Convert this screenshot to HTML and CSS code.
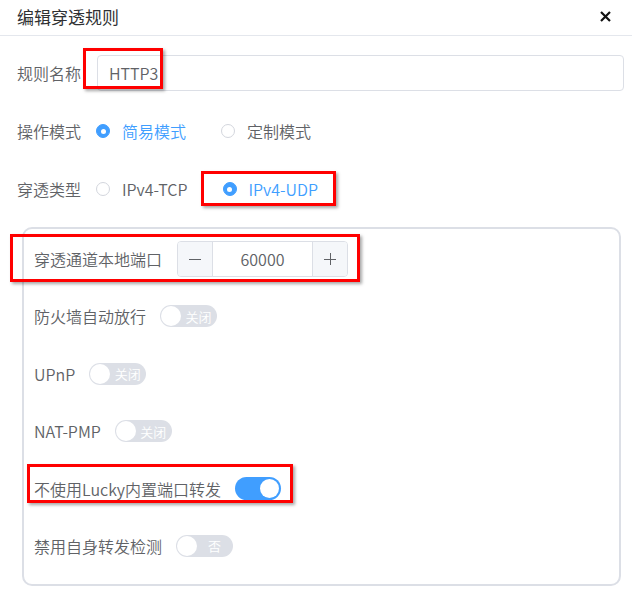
FILE: index.html
```html
<!DOCTYPE html>
<html lang="zh-CN">
<head>
<meta charset="utf-8">
<title>编辑穿透规则</title>
<link rel="stylesheet" href="styles.css">
</head>
<body>
<div class="dialog">
  <div class="header">
    <span class="title">编辑穿透规则</span>
    <span class="close">
      <svg width="11" height="11" viewBox="0 0 11 11"><path d="M1 1L10 10M10 1L1 10" stroke="#111" stroke-width="2.2" stroke-linecap="butt" fill="none"/></svg>
    </span>
  </div>
  <div class="body">
    <div class="form-row">
      <span class="label">规则名称</span>
      <div class="input">HTTP3</div>
    </div>
    <div class="form-row">
      <span class="label">操作模式</span>
      <span class="radio checked"><span class="radio-dot"></span><span class="radio-text">简易模式</span></span>
      <span class="radio"><span class="radio-dot"></span><span class="radio-text">定制模式</span></span>
    </div>
    <div class="form-row">
      <span class="label">穿透类型</span>
      <span class="radio"><span class="radio-dot"></span><span class="radio-text">IPv4-TCP</span></span>
      <span class="radio checked"><span class="radio-dot"></span><span class="radio-text">IPv4-UDP</span></span>
    </div>
    <div class="card">
      <div class="card-row">
        <span class="row-label">穿透通道本地端口</span>
        <div class="number-input">
          <span class="num-btn minus"><svg width="12" height="12" viewBox="0 0 12 12"><path d="M0 6.5H12" stroke="#606266" stroke-width="1"/></svg></span>
          <span class="num-value">60000</span>
          <span class="num-btn plus"><svg width="12" height="12" viewBox="0 0 12 12"><path d="M0 6.5H12M6.5 0V12" stroke="#606266" stroke-width="1"/></svg></span>
        </div>
      </div>
      <div class="card-row">
        <span class="row-label">防火墙自动放行</span>
        <span class="switch off"><span class="knob"></span><span class="switch-text">关闭</span></span>
      </div>
      <div class="card-row">
        <span class="row-label">UPnP</span>
        <span class="switch off"><span class="knob"></span><span class="switch-text">关闭</span></span>
      </div>
      <div class="card-row">
        <span class="row-label">NAT-PMP</span>
        <span class="switch off"><span class="knob"></span><span class="switch-text">关闭</span></span>
      </div>
      <div class="card-row">
        <span class="row-label">不使用Lucky内置端口转发</span>
        <span class="switch on"><span class="knob"></span></span>
      </div>
      <div class="card-row">
        <span class="row-label">禁用自身转发检测</span>
        <span class="switch off"><span class="knob"></span><span class="switch-text">否</span></span>
      </div>
    </div>
  </div>
  <div class="mark mark-name"></div>
  <div class="mark mark-udp"></div>
  <div class="mark mark-port"></div>
  <div class="mark mark-lucky"></div>
</div>
</body>
</html>
```

FILE: styles.css
```css
* { box-sizing: border-box; }
html, body { margin: 0; padding: 0; background: #fff; }
body {
  font-family: "Noto Sans CJK SC", "Noto Sans", sans-serif;
  font-weight: 350;
  color: #606266;
  font-size: 16px;
}
.dialog { position: relative; width: 632px; height: 593px; overflow: hidden; }
.header {
  height: 36px;
  border-bottom: 1px solid #e4e7ed;
  display: flex;
  align-items: center;
  justify-content: space-between;
  padding: 0 21px 1px 17px;
}
.title { font-size: 17px; font-weight: 400; color: #303133; line-height: 1; margin-top: -2px; }
.close { display: flex; width: 11px; height: 11px; margin-top: -2px; }
.body { padding: 17px 8px 0 17px; }
.form-row {
  height: 40px;
  margin-bottom: 18px;
  display: flex;
  align-items: center;
}
.label { width: 80px; flex: none; line-height: 1; }
.input {
  flex: 1;
  height: 36px;
  border: 1px solid #dcdfe6;
  border-radius: 4px;
  padding-left: 11px;
  display: flex;
  align-items: center;
  color: #606266;
}
.radio { display: inline-flex; align-items: center; margin-right: 36px; margin-left: -1px; }
.radio-dot {
  width: 14px; height: 14px;
  border-radius: 50%;
  border: 1px solid #d3d6dd;
  background: #fff;
  position: relative;
}
.radio.checked .radio-dot { background: #409eff; border-color: #409eff; }
.radio.checked .radio-dot::after {
  content: "";
  position: absolute;
  left: 50%; top: 50%;
  width: 5px; height: 5px;
  margin: -2.5px 0 0 -2.5px;
  border-radius: 50%;
  background: #fff;
}
.radio-text { padding-left: 12px; line-height: 1; }
.radio.checked .radio-text { color: #409eff; }
.card {
  margin: 0 3px 0 5px;
  border: 2px solid #dcdfe6;
  border-radius: 10px;
  padding: 10px 10px 18.5px 10px;
  display: flex;
  flex-direction: column;
  gap: 17.4px;
}
.card-row { height: 40px; display: flex; align-items: center; gap: 14px; }
.row-label { line-height: 1; }
.number-input {
  margin-left: 1px;
  width: 171px; height: 36px;
  border: 1px solid #dcdfe6;
  border-radius: 4px;
  display: flex;
  overflow: hidden;
}
.num-btn {
  width: 35px; flex: none;
  background: #f5f7fa;
  display: flex; align-items: center; justify-content: center;
}
.num-btn.minus { border-right: 1px solid #dcdfe6; }
.num-btn.plus { border-left: 1px solid #dcdfe6; }
.num-value { flex: 1; display: flex; align-items: center; justify-content: center; color: #606266; }
.switch {
  position: relative;
  height: 22px;
  width: 57px;
  border-radius: 11px;
  background: #dcdfe6;
  display: inline-flex;
  align-items: center;
}
.switch .knob {
  position: absolute;
  top: 1px; left: 1px;
  width: 20px; height: 20px;
  border-radius: 50%;
  background: #fff;
}
.switch-text {
  flex: 1;
  padding-left: 20px;
  text-align: center;
  color: #fff;
  font-size: 13px;
  line-height: 1;
}
.switch.on { width: 46px; height: 23px; background: #409eff; border-radius: 12px; }
.switch.on .knob { left: auto; right: 2px; top: 2px; width: 19px; height: 19px; }
.mark {
  position: absolute;
  border: 3px solid #f00;
  box-shadow: 2px 2px 3px rgba(0,0,0,0.35);
}
.mark-name { left: 83px; top: 48px; width: 80px; height: 41px; }
.mark-udp { left: 201px; top: 171px; width: 135px; height: 35px; }
.mark-port { left: 10px; top: 234px; width: 350px; height: 48px; }
.mark-lucky { left: 27px; top: 464px; width: 266px; height: 39px; }
```
